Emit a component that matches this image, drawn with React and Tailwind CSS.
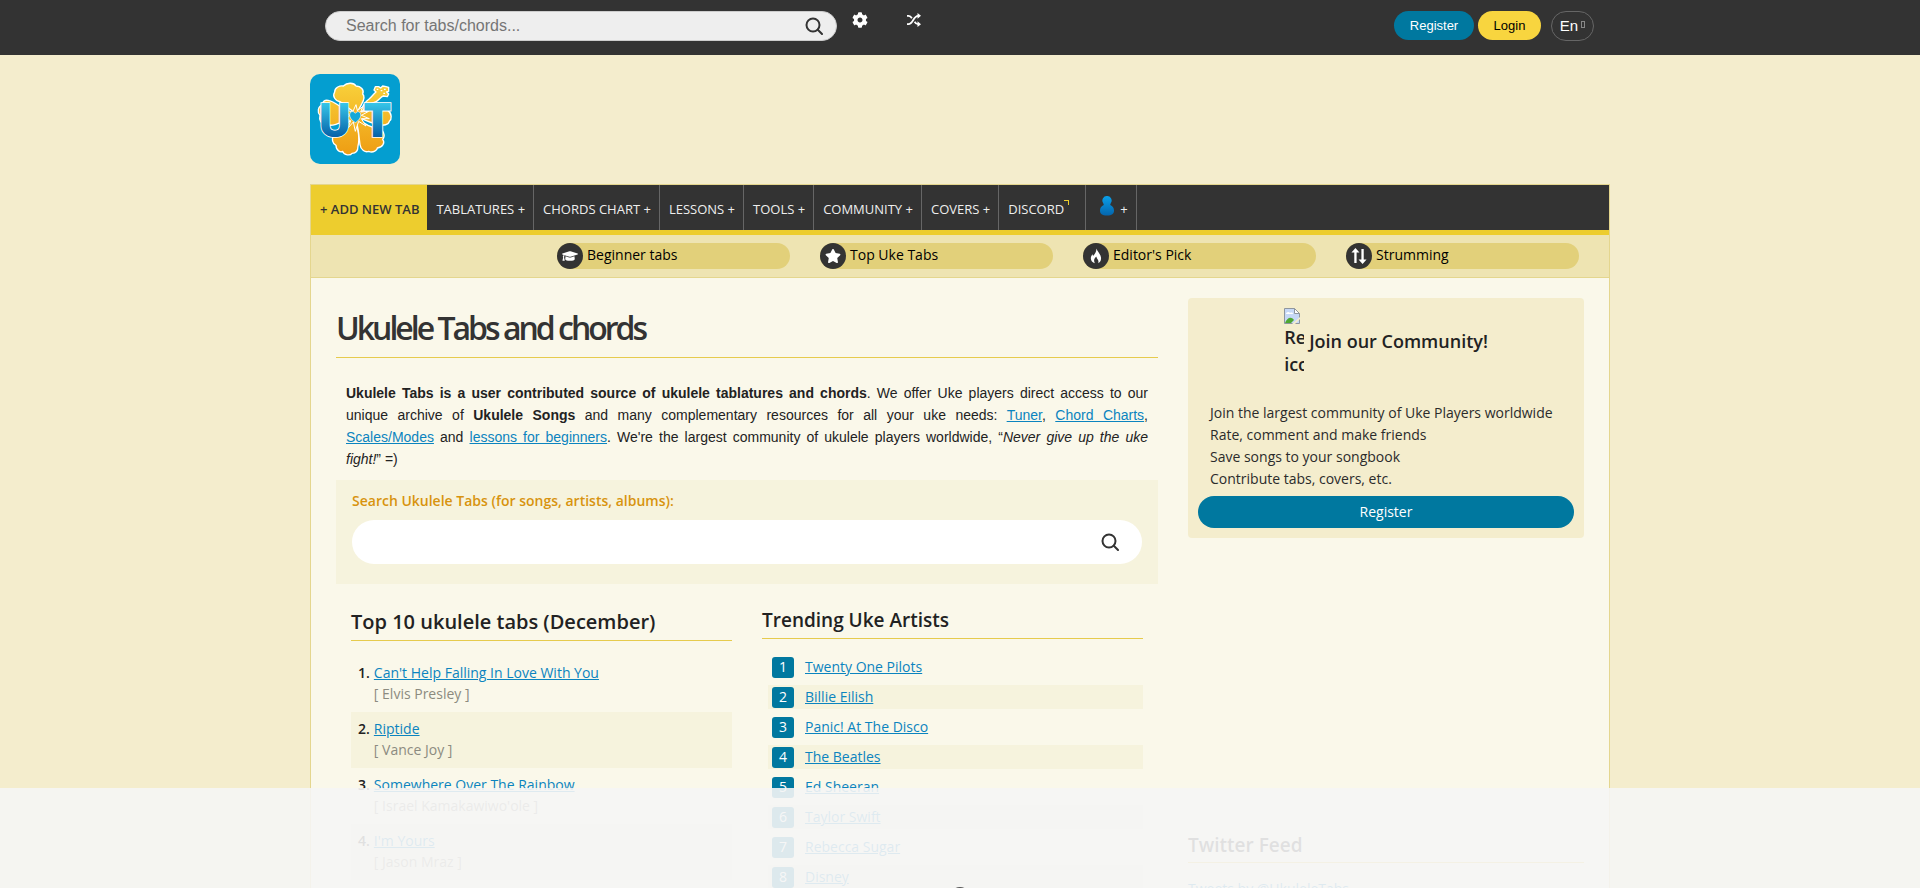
import { FaCog, FaGraduationCap, FaStar } from 'react-icons/fa';

const NAV = ['TABLATURES +', 'CHORDS CHART +', 'LESSONS +', 'TOOLS +', 'COMMUNITY +', 'COVERS +'];

const TABS = [
  { title: "Can't Help Falling In Love With You", artist: 'Elvis Presley' },
  { title: 'Riptide', artist: 'Vance Joy' },
  { title: 'Somewhere Over The Rainbow', artist: "Israel Kamakawiwo'ole" },
  { title: "I'm Yours", artist: 'Jason Mraz' },
];

const ARTISTS = [
  'Twenty One Pilots',
  'Billie Eilish',
  'Panic! At The Disco',
  'The Beatles',
  'Ed Sheeran',
  'Taylor Swift',
  'Rebecca Sugar',
  'Disney',
];

const PERKS = [
  'Join the largest community of Uke Players worldwide',
  'Rate, comment and make friends',
  'Save songs to your songbook',
  'Contribute tabs, covers, etc.',
];

const FlameIcon = () => (
  <svg viewBox="0 0 16 20" className="h-4 w-3" fill="currentColor">
    <path d="M8.5 0C9.5 3.5 13.8 7 14.6 11.6c.7 4-1.2 6.8-3.9 8.2.8-1.5.8-3.6-.4-5.2-.9-1.2-1.7-2.2-1.6-3.9-1.9 1.3-3.3 3.4-3.2 5.6 0 1.300.4 2.400 1 3.500C3.200 18.800.9 16.300 1.100 12.700c.1-2 1.200-3.600 1.900-5.200.5.8.9 1.500 1 2.400C6.800 7.400 8.800 4 8.500 0z" />
  </svg>
);

const StrumIcon = () => (
  <svg viewBox="0 0 18 18" className="size-4" fill="currentColor">
    <path d="M5 0l4.500 5H6.300v12H3.700V5H.5zM13 18l-4.500-5h3.200V1h2.600v12h3.200z" />
  </svg>
);

const SHORTCUTS = [
  { label: 'Beginner tabs', icon: <FaGraduationCap size={16} /> },
  { label: 'Top Uke Tabs', icon: <FaStar size={16} /> },
  { label: "Editor's Pick", icon: <FlameIcon /> },
  { label: 'Strumming', icon: <StrumIcon /> },
];

const SearchIcon = () => (
  <svg viewBox="0 0 18 18" className="size-[18px]" fill="none" stroke="#333" strokeWidth="2">
    <circle cx="8" cy="8" r="6.500" />
    <path d="M12.800 12.800L17 17" strokeLinecap="round" />
  </svg>
);

const ShuffleIcon = () => (
  <svg viewBox="0 0 14 14" className="size-[14px]" fill="none" stroke="currentColor" strokeWidth="1.800">
    <path d="M0 11.200h1.500C6 11.200 6.500 2.800 11 2.800M0 2.800h1.500c1.600 0 2.600 1 3.400 2.400M7.600 8.800c.8 1.400 1.800 2.400 3.400 2.400" />
    <path d="M10.500 0L14 2.800l-3.500 2.900zM10.500 8.300L14 11.200 10.500 14z" fill="currentColor" stroke="none" />
  </svg>
);

const Logo = () => (
  <svg viewBox="0 0 270 270" className="size-[90px] rounded-[10px]" role="img" aria-label="Ukulele Tabs">
    <defs>
      <linearGradient id="petal" x1="0" y1="30" x2="0" y2="245" gradientUnits="userSpaceOnUse">
        <stop offset="0" stopColor="#f8d03a" />
        <stop offset="1" stopColor="#ee9c12" />
      </linearGradient>
      <linearGradient id="letter" x1="0" y1="85" x2="0" y2="190" gradientUnits="userSpaceOnUse">
        <stop offset="0" stopColor="#38c8ea" />
        <stop offset="1" stopColor="#0560a8" />
      </linearGradient>
    </defs>
    <rect width="270" height="270" fill="#049ed0" />
    <g fill="url(#petal)" stroke="#fff" strokeWidth="4" strokeLinejoin="round">
      <path d="M126 110C106 96 100 88 92 84C76 82 66 66 74 54C74 40 90 34 100 36C112 24 132 26 138 36C152 36 164 48 158 60C168 70 158 84 154 92C150 102 142 112 134 118z" />
      <path d="M124 122C100 104 76 84 58 80C44 76 38 82 38 92C22 98 22 116 30 124C26 140 34 150 46 152C76 160 100 140 124 130z" />
      <path d="M142 122C160 108 180 90 206 94C224 90 236 98 234 110C246 118 246 136 238 142C236 152 220 156 208 152C184 148 162 138 142 128z" />
      <path d="M128 134C112 150 84 162 74 180C62 194 68 210 78 214C78 230 92 236 98 232C102 246 122 244 126 238C140 238 144 226 144 216C150 196 144 160 136 136z" />
      <path d="M138 134C144 160 148 190 150 212C152 228 166 236 176 232C190 238 202 228 202 222C218 220 226 206 218 196C228 184 218 166 208 164C188 162 162 150 144 132z" />
      <path d="M152 112C160 88 170 80 178 74C188 66 190 60 198 54L192 48L196 38L206 38L212 42L218 36L228 38L236 40L236 52L230 54L236 60L232 68L220 66C210 68 206 84 190 86C176 88 164 102 154 116z" />
    </g>
    <path
      d="M138 92L142 110L158 98L152 114L176 112L154 124L178 134L154 134L168 156L146 142L136 172L130 144L114 162L122 140L106 134L118 126L108 108L128 114z"
      fill="#f6b725"
      stroke="#fff"
      strokeWidth="3"
    />
    <path
      d="M136 146C124 138 116 128 120 118C124 110 132 112 136 118C142 110 150 112 152 120C154 130 146 140 136 146z"
      fill="#12a8d8"
      stroke="#fff"
      strokeWidth="2"
    />
    <g fill="url(#letter)" stroke="#fff" strokeWidth="5" paintOrder="stroke">
      <text x="26" y="188" className="font-['Roboto'] text-[144px] font-black">
        U
      </text>
      <text x="160" y="188" className="font-['Open_Sans'] text-[144px] font-extrabold">
        T
      </text>
    </g>
    <path d="M200 46h5M212 50h5M222 46h5M220 58h5" stroke="#fff" strokeWidth="4" />
  </svg>
);

const UserIcon = () => (
  <svg viewBox="0 0 16 20" className="h-5 w-4">
    <defs>
      <linearGradient id="user" x1="0" y1="0" x2="0" y2="1">
        <stop offset="0" stopColor="#0aa0ea" />
        <stop offset="1" stopColor="#0465ac" />
      </linearGradient>
    </defs>
    <path
      d="M8 0a4.500 4.500 0 0 1 4 6.800c-.4.900-.8 1.500-.8 2.200C13.800 10.200 15 12 15 14.500c0 3.500-2 5-7 5s-7-1.500-7-5C1 12 2.200 10.200 4.800 9c0-.7-.4-1.300-.8-2.200A4.500 4.500 0 0 1 8 0z"
      fill="url(#user)"
    />
  </svg>
);

const BrokenImage = () => (
  <svg viewBox="0 0 16 16" className="block size-4">
    <path d="M.5.5h10l5 5v10H.5z" fill="#c6d8f6" stroke="#8f969e" />
    <path d="M2 6c0-2 3-3 4-1 2-1 3 0 3 1z" fill="#fff" />
    <path d="M1 15c2-5 6-7 9-3l-3 3z" fill="#4ea832" />
    <path d="M10.500.5v5h5z" fill="#fff" stroke="#8f969e" />
    <path d="M8 16l8-7v2l-5 5z" fill="#f4edcd" />
  </svg>
);

const TextLink = ({ children }) => (
  <a href="#" className="text-[#0b84bf] underline">
    {children}
  </a>
);

const TopBar = () => (
  <header className="h-[55px] bg-[#333] font-['Liberation_Sans',sans-serif]">
    <div className="mx-auto flex max-w-[1300px] items-start pt-[11px] pr-4 pl-[15px]">
      <form className="flex h-[30px] w-[512px] items-center rounded-full border border-[#ccc] bg-[#eee] pr-[13px] pl-5">
        <input
          type="search"
          aria-label="Search for tabs/chords"
          placeholder="Search for tabs/chords..."
          className="min-w-0 flex-1 bg-transparent text-base text-[#333] outline-none placeholder:text-[#757575]"
        />
        <button type="button" aria-label="Search" className="pb-px">
          <SearchIcon />
        </button>
      </form>
      <button type="button" aria-label="Settings" className="ml-[15px] pt-px text-white">
        <FaCog size={16} />
      </button>
      <button type="button" aria-label="Random tab" className="ml-[39px] pt-[2px] text-white">
        <ShuffleIcon />
      </button>
      <div className="ml-auto flex items-start text-[13px]">
        <button type="button" className="h-[29px] w-20 rounded-full bg-[#00789f] text-white">
          Register
        </button>
        <button type="button" className="ml-1 h-[29px] w-[63px] rounded-full bg-[#f8d53f] text-black">
          Login
        </button>
        <button
          type="button"
          className="ml-[10px] flex h-[30px] w-[43px] items-center justify-center gap-[3px] rounded-full border border-[#666] text-[15px] text-white"
        >
          En
          <span className="mb-[3px] h-[7px] w-1 border border-[#888]" />
        </button>
      </div>
    </div>
  </header>
);

const NavBar = () => (
  <nav className="flex h-[50px] border-b-[5px] border-[#edcd2e] bg-[#333] text-[13px] text-[#eee]">
    <a href="#" className="-mb-[5px] flex items-center bg-[#edcd2e] pr-2 pl-[9px] font-semibold text-[#333]">
      + ADD NEW TAB
    </a>
    {NAV.map((label) => (
      <a key={label} href="#" className="flex items-center border-r border-[#666] pt-[5px] pr-2 pl-[9px]">
        {label}
      </a>
    ))}
    <a href="#" className="flex items-center border-r border-[#666] pt-[5px] pr-4 pl-[9px]">
      DISCORD
      <span className="mb-4 h-[5px] w-[5px] border-t border-r border-[#edcd2e]" />
    </a>
    <a href="#" aria-label="Account" className="flex items-center gap-[5px] border-r border-[#666] pt-[5px] pr-2 pl-[13px]">
      <span className="mb-2">
        <UserIcon />
      </span>
      +
    </a>
  </nav>
);

const Shortcuts = () => (
  <div className="grid h-[43px] grid-cols-4 gap-[30px] border-b border-[#e4d68e] bg-[#eee4b2] pt-2 pr-[30px] pl-[246px]">
    {SHORTCUTS.map((s) => (
      <a key={s.label} href="#" className="flex h-[26px] items-center gap-1 rounded-full bg-[#e2d07a] text-sm text-black">
        <span className="flex size-[26px] items-center justify-center rounded-full bg-[#333] text-white">{s.icon}</span>
        <span className="pb-[2px]">{s.label}</span>
      </a>
    ))}
  </div>
);

const TopTabs = () => (
  <section className="flex-1">
    <h2 className="border-b border-[#e6cb4d] pb-1 text-xl leading-7 font-semibold">Top 10 ukulele tabs (December)</h2>
    <ol className="mt-[15px]">
      {TABS.map((t, i) => (
        <li key={t.title} className="flex h-14 gap-1 pt-[6px] pl-[7px] text-sm leading-[21px] even:bg-[#f6f3dd]">
          <span className="font-semibold">{i + 1}.</span>
          <div>
            <TextLink>{t.title}</TextLink>
            <p className="text-[#8c8b80]">[ {t.artist} ]</p>
          </div>
        </li>
      ))}
    </ol>
  </section>
);

const TrendingArtists = () => (
  <section className="flex-1">
    <h2 className="border-b border-[#e6cb4d] pb-[5px] text-[19px] leading-[25px] font-semibold">Trending Uke Artists</h2>
    <ol className="mt-4 flex flex-col gap-[6px]">
      {ARTISTS.map((name, i) => (
        <li key={name} className="ml-[6px] flex h-6 items-center gap-[11px] pl-1 text-sm even:bg-[#f6f3dd]">
          <span className="flex h-[21px] w-[22px] items-center justify-center rounded-[3px] bg-[#00789f] text-white">
            {i + 1}
          </span>
          <TextLink>{name}</TextLink>
        </li>
      ))}
    </ol>
  </section>
);

const Sidebar = () => (
  <aside className="w-[396px] shrink-0">
    <div className="rounded-[4px] bg-[#f4edcd] p-[10px]">
      <div className="flex justify-center gap-[5px] text-lg leading-[27px] font-semibold">
        <div className="h-[70px] w-5 overflow-hidden">
          <BrokenImage />
          <p className="w-5">Register icon</p>
        </div>
        <h3 className="pt-5">Join our Community!</h3>
      </div>
      <ul className="mt-6 px-3 text-sm leading-[22px] text-[#2b2b2b]">
        {PERKS.map((p) => (
          <li key={p}>{p}</li>
        ))}
      </ul>
      <button type="button" className="mt-[6px] h-8 w-full rounded-full bg-[#00789f] text-sm text-white">
        Register
      </button>
    </div>
    <section className="mt-[295px]">
      <h2 className="border-b border-[#e6cb4d] pb-1 text-[19px] leading-[25px] font-semibold">Twitter Feed</h2>
      <p className="mt-4 text-sm">
        <TextLink>Tweets by @UkuleleTabs</TextLink>
      </p>
    </section>
  </aside>
);

const App = () => (
  <div className="h-screen overflow-hidden bg-[#f4edcd] font-['Open_Sans',sans-serif] text-[#222]">
    <TopBar />
    <div className="mx-auto max-w-[1300px]">
      <div className="pt-[19px] pb-5">
        <a href="#" className="inline-block align-top">
          <Logo />
        </a>
      </div>
      <div className="border border-[#e4d68e] bg-[#faf8ea]">
        <NavBar />
        <Shortcuts />
        <main className="flex gap-[30px] pt-5 pr-[25px] pl-[25px]">
          <div className="min-w-0 flex-1">
            <h1 className="border-b border-[#e6cb4d] pt-2 pb-2 text-[32px] leading-[43px] font-semibold tracking-[-3px] text-[#333]">
              Ukulele Tabs and chords
            </h1>
            <p className="px-[10px] pt-6 text-justify font-['Liberation_Sans',sans-serif] text-sm leading-[22px]">
              <b>Ukulele Tabs is a user contributed source of ukulele tablatures and chords</b>. We offer Uke players direct
              access to our unique archive of <b>Ukulele Songs</b> and many complementary resources for all your uke needs:{' '}
              <TextLink>Tuner</TextLink>, <TextLink>Chord Charts</TextLink>, <TextLink>Scales/Modes</TextLink> and{' '}
              <TextLink>lessons for beginners</TextLink>. We're the largest community of ukulele players worldwide, “
              <i>Never give up the uke fight!</i>” =)
            </p>
            <form className="mt-[10px] bg-[#f6f3dd] px-4 pt-[10px] pb-5">
              <label htmlFor="song-search" className="block text-sm leading-[22px] font-semibold text-[#d8930f]">
                Search Ukulele Tabs (for songs, artists, albums):
              </label>
              <div className="mt-2 flex h-11 items-center rounded-full bg-white pr-[23px] pl-5">
                <input id="song-search" type="text" className="min-w-0 flex-1 bg-transparent text-base outline-none" />
                <button type="button" aria-label="Search">
                  <SearchIcon />
                </button>
              </div>
            </form>
            <div className="flex gap-[30px] px-[15px] pt-6">
              <TopTabs />
              <TrendingArtists />
            </div>
          </div>
          <Sidebar />
        </main>
      </div>
    </div>
    {/* Banner slot, pinned to the bottom of the window */}
    <div className="fixed inset-x-0 bottom-0 flex h-[100px] items-end justify-center overflow-hidden bg-[#f5f5f5]/90">
      <span className="-mb-[19px] size-5 rounded-full border-2 border-[#555]" />
    </div>
  </div>
);

export default App;
